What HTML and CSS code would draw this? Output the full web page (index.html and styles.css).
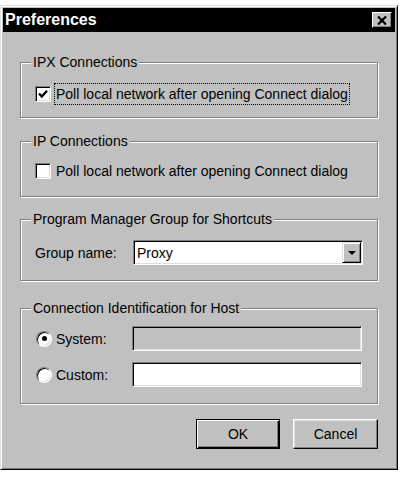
FILE: index.html
```html
<!DOCTYPE html>
<html>
    <head>
        <meta charset="utf-8" />
        <title>Preferences</title>
        <link rel="stylesheet" href="styles.css">
    </head>
    <body>
        <div class="window">
            <div class="titlebar">
                <span class="title">Preferences</span>
                <span class="close">
                    <svg width="10" height="9" viewBox="0 0 10 9">
                        <path d="M1 0.5 L9 8.5 M9 0.5 L1 8.5" stroke="#000" stroke-width="2.2" fill="none" />
                    </svg>
                </span>
            </div>
            <div class="client">
                <div class="group g-ipx">
                    <span class="group-title">IPX Connections</span>
                    <div class="check-row">
                        <span class="checkbox">
                            <svg width="10" height="10" viewBox="0 0 10 10">
                                <path d="M1 4.5 L3.8 7.5 L9 1.8" stroke="#000" stroke-width="2.4" fill="none" />
                            </svg>
                        </span>
                        <span class="check-label focus">Poll local network after opening Connect dialog</span>
                    </div>
                </div>
                <div class="group g-ip">
                    <span class="group-title">IP Connections</span>
                    <div class="check-row">
                        <span class="checkbox"></span>
                        <span class="check-label">Poll local network after opening Connect dialog</span>
                    </div>
                </div>
                <div class="group g-pm">
                    <span class="group-title">Program Manager Group for Shortcuts</span>
                    <div class="field-row">
                        <span class="field-label">Group name:</span>
                        <div class="combo">
                            <span class="combo-text">Proxy</span>
                            <span class="combo-btn"><span class="arrow"></span></span>
                        </div>
                    </div>
                </div>
                <div class="group g-host">
                    <span class="group-title">Connection Identification for Host</span>
                    <div class="field-row">
                        <span class="radio checked"></span>
                        <span class="radio-label">System:</span>
                        <div class="field disabled"></div>
                    </div>
                    <div class="field-row">
                        <span class="radio"></span>
                        <span class="radio-label">Custom:</span>
                        <div class="field"></div>
                    </div>
                </div>
                <div class="buttons">
                    <button class="btn default btn-ok">OK</button>
                    <button class="btn btn-cancel">Cancel</button>
                </div>
            </div>
        </div>
    </body>
</html>
```

FILE: styles.css
```css
body {
    margin: 0;
    background: #ffffff;
    font-family: "Liberation Sans", Arial, sans-serif;
    font-size: 14px;
    color: #000000;
}
.window {
    width: 398px;
    height: 465px;
    margin-top: 5px;
    box-sizing: border-box;
    background: #c0c0c0;
    border: 1px solid;
    border-color: #dfdfdf #000000 #000000 #dfdfdf;
    box-shadow: inset 1px 1px #ffffff, inset -1px -1px #808080;
    padding: 2px;
    display: flex;
    flex-direction: column;
}
.titlebar {
    height: 24px;
    background: #000000;
    color: #ffffff;
    display: flex;
    align-items: center;
    justify-content: space-between;
    padding: 0 3px 0 2px;
}
.title {
    font-weight: bold;
    font-size: 16px;
}
.close {
    width: 20px;
    height: 16px;
    box-sizing: border-box;
    background: #c0c0c0;
    border: 1px solid;
    border-color: #ffffff #000000 #000000 #ffffff;
    box-shadow: inset -1px -1px #808080;
    display: flex;
    align-items: center;
    justify-content: center;
}
.client {
    flex: 1;
    display: flex;
    flex-direction: column;
    padding: 30px 17px 0 17px;
}
.group {
    position: relative;
    border: 1px solid #808080;
    box-shadow: 1px 1px #ffffff, inset 1px 1px #ffffff;
    padding-left: 14px;
}
.group-title {
    position: absolute;
    top: -9px;
    left: 10px;
    padding: 0 2px;
    line-height: 16px;
    background: #c0c0c0;
}
.g-ipx {
    padding-top: 20px;
    padding-bottom: 12px;
}
.g-ip {
    margin-top: 23px;
    padding-top: 18px;
    padding-bottom: 14px;
}
.g-pm {
    margin-top: 22px;
    padding-top: 20px;
    padding-bottom: 15px;
}
.g-host {
    margin-top: 27px;
    padding-top: 17px;
    padding-bottom: 16px;
    display: flex;
    flex-direction: column;
    gap: 11px;
}
.check-row {
    display: flex;
    align-items: center;
}
.checkbox {
    width: 16px;
    height: 16px;
    box-sizing: border-box;
    background: #ffffff;
    border: 1px solid;
    border-color: #808080 #ffffff #ffffff #808080;
    box-shadow: inset 1px 1px #000000, inset -1px -1px #dfdfdf;
    display: flex;
    align-items: center;
    justify-content: center;
}
.check-label {
    margin-left: 3px;
    padding: 2px 1px;
    line-height: 16px;
    border: 1px dotted transparent;
}
.focus {
    border-color: #000000;
}
.field-row {
    display: flex;
    align-items: center;
}
.field-label {
    width: 98px;
}
.combo,
.field {
    width: 230px;
    height: 25px;
    box-sizing: border-box;
    background: #ffffff;
    border: 1px solid;
    border-color: #808080 #ffffff #ffffff #808080;
    box-shadow: inset 1px 1px #000000, inset -1px -1px #dfdfdf;
}
.field.disabled {
    background: #c0c0c0;
}
.combo {
    display: flex;
    align-items: center;
    justify-content: space-between;
    padding: 1px 1px 1px 3px;
}
.combo-btn {
    width: 19px;
    height: 21px;
    box-sizing: border-box;
    background: #c0c0c0;
    border: 1px solid;
    border-color: #dfdfdf #000000 #000000 #dfdfdf;
    box-shadow: inset 1px 1px #ffffff, inset -1px -1px #808080;
    display: flex;
    align-items: center;
    justify-content: center;
}
.arrow {
    width: 0;
    height: 0;
    border-left: 4px solid transparent;
    border-right: 4px solid transparent;
    border-top: 4px solid #000000;
    margin-top: 1px;
}
.radio {
    width: 16px;
    height: 16px;
    box-sizing: border-box;
    border-radius: 50%;
    background: #ffffff;
    border: 1px solid;
    border-color: #808080 #ffffff #ffffff #808080;
    box-shadow: inset 1px 1px #000000, inset -1px -1px #dfdfdf;
    display: flex;
    align-items: center;
    justify-content: center;
    margin-left: 1px;
}
.radio.checked::after {
    content: '';
    width: 5px;
    height: 5px;
    border-radius: 50%;
    background: #000000;
}
.radio-label {
    width: 76px;
    margin-left: 4px;
}
.buttons {
    display: flex;
    justify-content: flex-end;
    gap: 13px;
    margin-top: 15px;
}
.btn {
    height: 30px;
    box-sizing: border-box;
    font: inherit;
    color: #000000;
    background: #c0c0c0;
    border: 1px solid;
    border-color: #ffffff #000000 #000000 #ffffff;
    box-shadow: inset -1px -1px #808080, inset 1px 1px #dfdfdf;
    padding: 0;
}
.btn.default {
    border-color: #000000;
    box-shadow: inset 1px 1px #ffffff, inset -1px -1px #000000, inset -2px -2px #808080;
}
.btn-ok {
    width: 84px;
}
.btn-cancel {
    width: 85px;
}
```
